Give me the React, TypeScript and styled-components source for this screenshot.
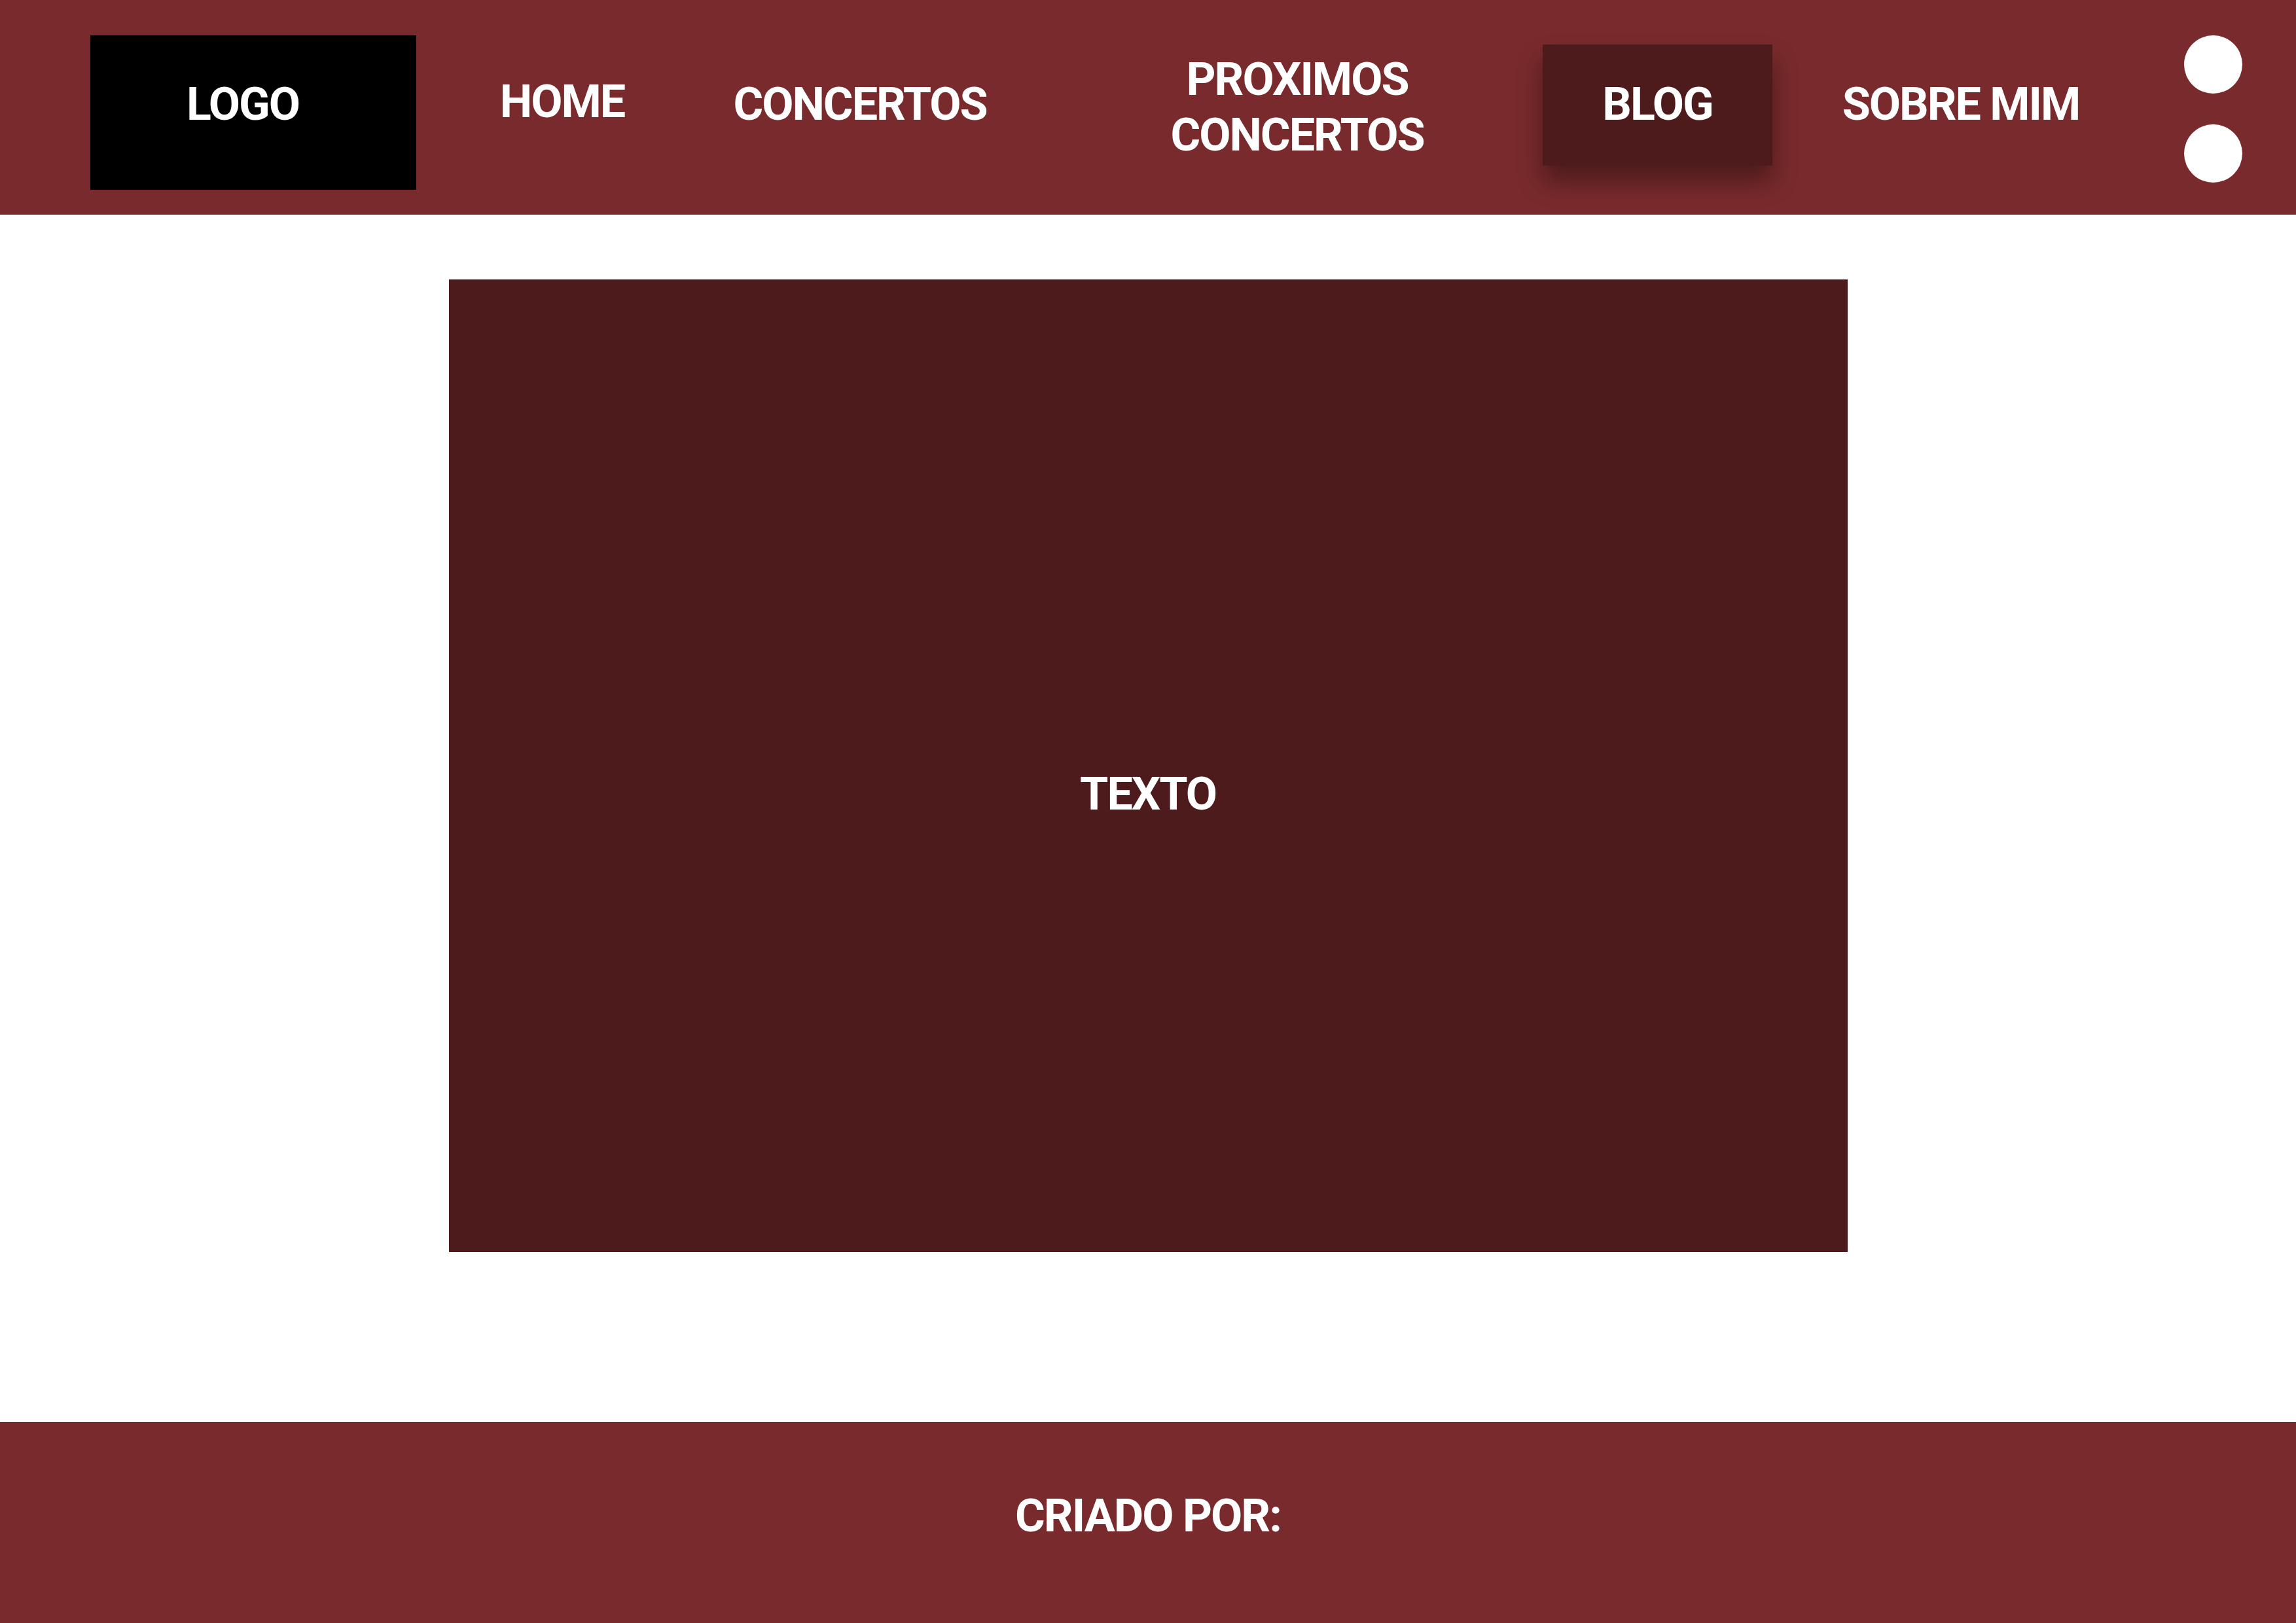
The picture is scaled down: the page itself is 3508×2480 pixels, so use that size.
import React from "react";
import styled, { createGlobalStyle } from "styled-components";

const GlobalStyle = createGlobalStyle`
  html, body {
    margin: 0;
    padding: 0;
    background: #ffffff;
  }
  body {
    font-family: Roboto, "Liberation Sans", Arial, sans-serif;
  }
  * { box-sizing: border-box; }
`;

const Page = styled.div`
  width: 3508px;
  min-height: 2480px;
  display: flex;
  flex-direction: column;
  background: #ffffff;
`;

const Header = styled.header`
  height: 328px;
  flex: none;
  background: #792a2c;
  display: flex;
  align-items: flex-start;
  padding-left: 138px;
`;

const Label = styled.span`
  font-family: Roboto, "Liberation Sans", Arial, sans-serif;
  font-weight: 700;
  font-size: 70px;
  line-height: 85px;
  color: #ffffff;
  letter-spacing: -2px;
  white-space: nowrap;
`;

const LogoBox = styled.div`
  width: 498px;
  height: 236px;
  margin-top: 54px;
  flex: none;
  background: #000000;
  display: flex;
  justify-content: center;
  padding-top: 63px;
  padding-right: 32px;
`;

const NavItem = styled.div<{ $width: number; $offset: number; $top: number }>`
  flex: none;
  width: ${(p) => p.$width}px;
  margin-left: ${(p) => p.$offset}px;
  margin-top: ${(p) => p.$top}px;
  text-align: center;
  display: flex;
  flex-direction: column;
  align-items: center;
`;

const ActiveItem = styled.div<{ $offset: number }>`
  flex: none;
  width: 351px;
  height: 185px;
  margin-left: ${(p) => p.$offset}px;
  margin-top: 68px;
  background: #4e1b1c;
  box-shadow: 0 24px 34px rgba(0, 0, 0, 0.36);
  display: flex;
  justify-content: center;
  padding-top: 49px;
`;

const Dots = styled.div<{ $offset: number }>`
  flex: none;
  margin-left: ${(p) => p.$offset}px;
  margin-top: 54px;
  display: flex;
  flex-direction: column;
  gap: 47px;
`;

const Dot = styled.span`
  display: block;
  width: 89px;
  height: 89px;
  border-radius: 50%;
  background: #ffffff;
`;

const Main = styled.main`
  flex: 1;
  display: flex;
  justify-content: center;
  padding-top: 99px;
`;

const Feature = styled.section`
  width: 2137px;
  height: 1486px;
  background: #4e1b1c;
  display: flex;
  align-items: center;
  justify-content: center;
  padding-top: 86px;
`;

const Footer = styled.footer`
  height: 307px;
  flex: none;
  background: #792a2c;
  display: flex;
  justify-content: center;
  padding-top: 101px;
`;

export default function App() {
  return (
    <>
      <GlobalStyle />
      <Page>
        <Header>
          <LogoBox>
            <Label>LOGO</Label>
          </LogoBox>
          <NavItem $width={260} $offset={93} $top={113}>
            <Label>HOME</Label>
          </NavItem>
          <NavItem $width={440} $offset={105} $top={117}>
            <Label>CONCERTOS</Label>
          </NavItem>
          <NavItem $width={440} $offset={228} $top={79}>
            <Label>PROXIMOS</Label>
            <Label>CONCERTOS</Label>
          </NavItem>
          <ActiveItem $offset={155}>
            <Label>BLOG</Label>
          </ActiveItem>
          <NavItem $width={400} $offset={88} $top={117}>
            <Label>SOBRE MIM</Label>
          </NavItem>
          <Dots $offset={141}>
            <Dot />
            <Dot />
          </Dots>
        </Header>
        <Main>
          <Feature>
            <Label>TEXTO</Label>
          </Feature>
        </Main>
        <Footer>
          <Label>CRIADO POR:</Label>
        </Footer>
      </Page>
    </>
  );
}
